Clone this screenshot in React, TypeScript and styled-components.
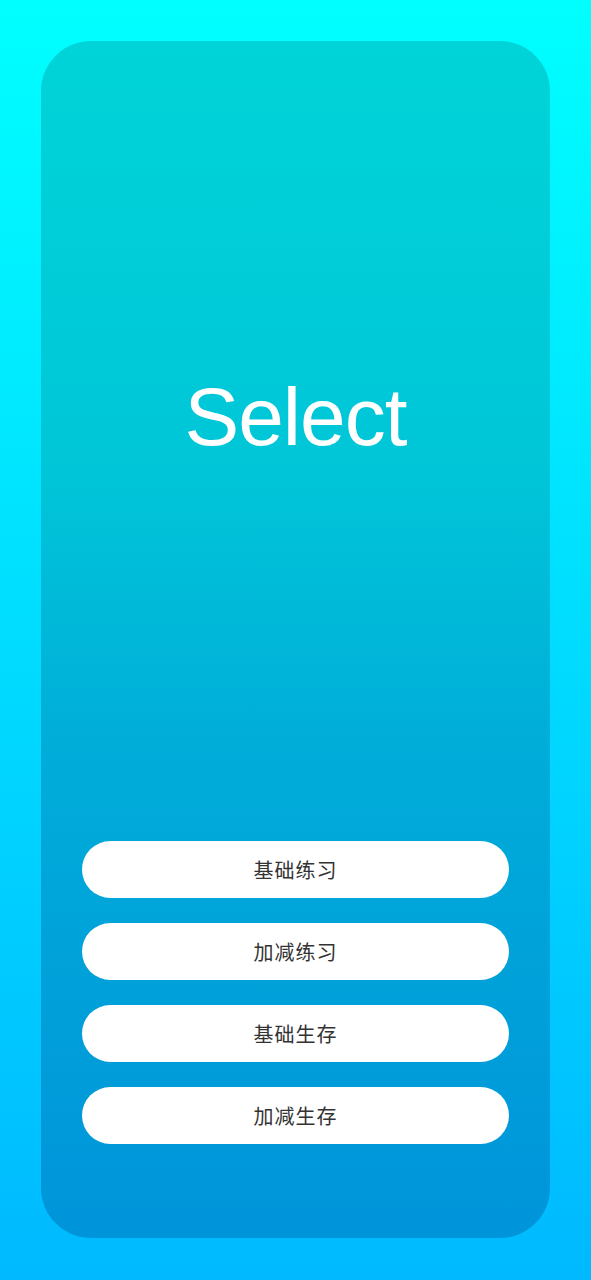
import React from "react";
import styled, { createGlobalStyle } from "styled-components";

const GlobalStyle = createGlobalStyle`
  html, body {
    margin: 0;
    padding: 0;
  }
  body {
    font-family: "Liberation Sans", "Noto Sans CJK SC", Arial, sans-serif;
  }
`;

const Page = styled.div`
  width: 591px;
  height: 1280px;
  box-sizing: border-box;
  padding: 41px;
  background: linear-gradient(180deg, #00ffff 0%, #00dcff 50%, #00b9ff 100%);
`;

const Card = styled.div`
  height: 1197px;
  box-sizing: border-box;
  border-radius: 50px;
  background: linear-gradient(180deg, #00d4d8 0%, #00c6d8 35%, #00acd9 60%, #0094da 100%);
  display: flex;
  flex-direction: column;
  justify-content: space-between;
  padding: 329px 41px 94px;
`;

const Title = styled.h1`
  margin: 0;
  text-align: center;
  color: #ffffff;
  font-family: "Liberation Sans", Arial, sans-serif;
  font-weight: 400;
  font-size: 82px;
  letter-spacing: -1px;
  line-height: normal;
`;

const ButtonList = styled.div`
  display: flex;
  flex-direction: column;
  gap: 25px;
`;

const MenuButton = styled.button`
  height: 57px;
  width: 100%;
  border: none;
  border-radius: 29px;
  background: #ffffff;
  color: #333333;
  font-family: "Noto Sans CJK SC", sans-serif;
  font-size: 20px;
  letter-spacing: 1px;
  cursor: pointer;
  display: flex;
  align-items: center;
  justify-content: center;
  padding: 0;
`;

const items = ["基础练习", "加减练习", "基础生存", "加减生存"];

export default function App() {
  return (
    <>
      <GlobalStyle />
      <Page>
        <Card>
          <Title>Select</Title>
          <ButtonList>
            {items.map((label) => (
              <MenuButton key={label}>{label}</MenuButton>
            ))}
          </ButtonList>
        </Card>
      </Page>
    </>
  );
}
